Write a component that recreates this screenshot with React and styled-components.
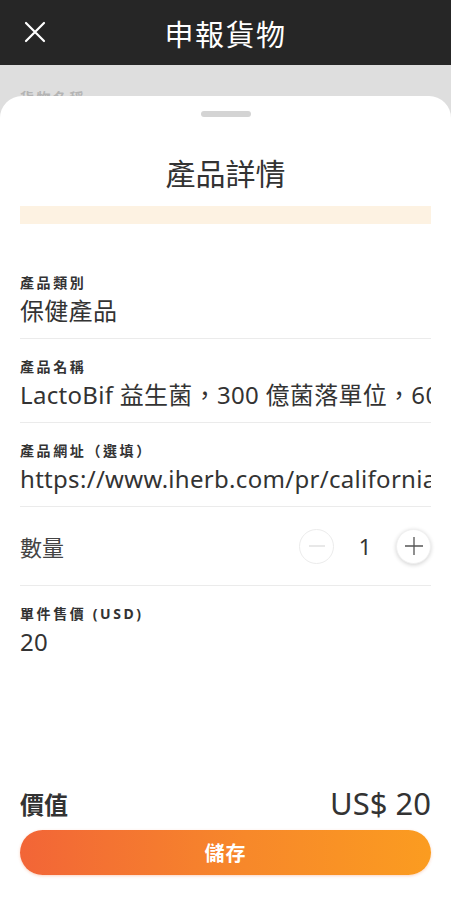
import React from "react"
import styled, { createGlobalStyle } from "styled-components"

const GlobalStyle = createGlobalStyle`
  html, body {
    margin: 0;
    padding: 0;
    background: #dedede;
  }
  body {
    font-family: "Noto Sans", "Noto Sans CJK TC", sans-serif;
    color: #333;
  }
`

const fields = [
  { label: "產品類別", value: "保健產品" },
  { label: "產品名稱", value: "LactoBif 益生菌，300 億菌落單位，60 粒素食膠囊" },
  { label: "產品網址（選填）", value: "https://www.iherb.com/pr/california-gold-nutrition" },
]

const App = () => {
  return (
    <Screen>
      <GlobalStyle />
      <TopBar>
        <CloseButton aria-label="close">
          <svg width="22" height="22" viewBox="0 0 22 22">
            <path d="M2 2 L20 20 M20 2 L2 20" stroke="#fff" strokeWidth="2.2" strokeLinecap="round" />
          </svg>
        </CloseButton>
        <TopTitle>申報貨物</TopTitle>
      </TopBar>
      <Backdrop>
        <BackdropText>貨物名稱</BackdropText>
      </Backdrop>
      <Sheet>
        <Handle />
        <SheetTitle>產品詳情</SheetTitle>
        <Notice />
        <Form>
          {fields.map((f) => (
            <Field key={f.label}>
              <Label>{f.label}</Label>
              <Value>{f.value}</Value>
            </Field>
          ))}
          <QtyRow>
            <QtyLabel>數量</QtyLabel>
            <Stepper>
              <StepButton disabled>
                <svg width="18" height="18" viewBox="0 0 18 18">
                  <path d="M1 9 H17" stroke="#dcdcdc" strokeWidth="1.3" />
                </svg>
              </StepButton>
              <QtyValue>1</QtyValue>
              <StepButton $raised>
                <svg width="20" height="20" viewBox="0 0 20 20">
                  <path d="M1 10 H19 M10 1 V19" stroke="#555" strokeWidth="1.3" />
                </svg>
              </StepButton>
            </Stepper>
          </QtyRow>
          <Field>
            <Label>單件售價 (USD)</Label>
            <Value>20</Value>
          </Field>
        </Form>
        <Spacer />
        <Footer>
          <TotalRow>
            <TotalLabel>價值</TotalLabel>
            <TotalValue>US$ 20</TotalValue>
          </TotalRow>
          <SaveButton>儲存</SaveButton>
        </Footer>
      </Sheet>
    </Screen>
  )
}

export default App

const Screen = styled.div`
  width: 451px;
  height: 900px;
  display: flex;
  flex-direction: column;
  overflow: hidden;
  background: #dedede;
`

const TopBar = styled.header`
  height: 65px;
  flex-shrink: 0;
  background: #262626;
  display: flex;
  align-items: center;
  justify-content: center;
  position: relative;
`

const CloseButton = styled.button`
  position: absolute;
  left: 24px;
  top: 21px;
  width: 22px;
  height: 22px;
  padding: 0;
  border: none;
  background: none;
  display: flex;
`

const TopTitle = styled.h1`
  margin: 0;
  font-size: 29px;
  font-weight: 400;
  color: #fff;
  letter-spacing: 1.5px;
`

const Backdrop = styled.div`
  height: 31px;
  flex-shrink: 0;
  overflow: hidden;
  padding: 22px 20px 0;
  box-sizing: border-box;
`

const BackdropText = styled.div`
  font-size: 14px;
  font-weight: 700;
  letter-spacing: 2.5px;
  color: #999;
  opacity: 0.6;
`

const Sheet = styled.section`
  flex: 1;
  background: #fff;
  border-radius: 22px 22px 0 0;
  display: flex;
  flex-direction: column;
  padding: 15px 20px 25px;
`

const Handle = styled.div`
  align-self: center;
  width: 50px;
  height: 6px;
  border-radius: 3px;
  background: #d4d4d4;
`

const SheetTitle = styled.h2`
  margin: 40px 0 0;
  text-align: center;
  font-size: 30px;
  line-height: 34px;
  font-weight: 400;
  color: #333;
`

const Notice = styled.div`
  height: 18px;
  margin-top: 15px;
  background: #fdf2e2;
`

const Form = styled.div`
  margin-top: 49px;
  display: flex;
  flex-direction: column;
`

const Field = styled.div`
  display: flex;
  flex-direction: column;
  gap: 3px;
  padding: 18px 0 12px;
  border-top: 1px solid #ebebeb;
  &:first-child {
    border-top: none;
    padding-top: 0;
  }
`

const Label = styled.div`
  font-size: 14px;
  line-height: 20px;
  font-weight: 700;
  color: #333;
  letter-spacing: 2.6px;
`

const Value = styled.div`
  font-size: 24px;
  line-height: 30px;
  color: #333;
  letter-spacing: 0.3px;
  white-space: nowrap;
  overflow: hidden;
`

const QtyRow = styled.div`
  height: 80px;
  display: flex;
  align-items: center;
  justify-content: space-between;
  border-top: 1px solid #ebebeb;
  border-bottom: 1px solid #ebebeb;
  box-sizing: border-box;
  & + ${Field} {
    border-top: none;
  }
`

const QtyLabel = styled.span`
  font-size: 22px;
  color: #444;
`

const Stepper = styled.div`
  display: flex;
  align-items: center;
`

const StepButton = styled.button`
  width: 35px;
  height: 35px;
  border-radius: 50%;
  padding: 0;
  display: flex;
  align-items: center;
  justify-content: center;
  background: #fff;
  border: 1px solid ${(p) => (p.$raised ? "#f0f0f0" : "#ececec")};
  box-shadow: ${(p) => (p.$raised ? "0 1px 4px rgba(0,0,0,0.18)" : "none")};
`

const QtyValue = styled.span`
  width: 62px;
  text-align: center;
  font-size: 22px;
  color: #333;
`

const Spacer = styled.div`
  flex: 1;
`

const Footer = styled.div`
  display: flex;
  flex-direction: column;
  gap: 7px;
`

const TotalRow = styled.div`
  height: 40px;
  display: flex;
  align-items: center;
  justify-content: space-between;
`

const TotalLabel = styled.span`
  font-size: 24px;
  font-weight: 700;
  color: #333;
`

const TotalValue = styled.span`
  font-size: 31px;
  color: #333;
`

const SaveButton = styled.button`
  height: 45px;
  border: none;
  border-radius: 23px;
  background: linear-gradient(90deg, #f26537 0%, #f7882a 55%, #fb9c20 100%);
  color: #fff;
  font-family: "Noto Sans", "Noto Sans CJK TC", sans-serif;
  font-size: 20px;
  font-weight: 700;
  letter-spacing: 1px;
  box-shadow: 0 1px 3px rgba(240, 110, 50, 0.3);
`
